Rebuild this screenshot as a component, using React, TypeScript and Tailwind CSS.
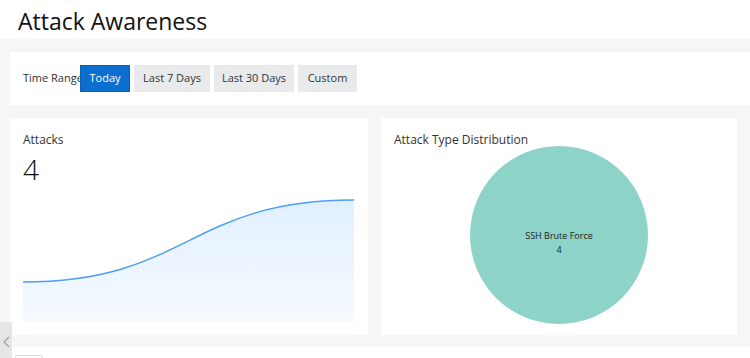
import React from 'react';

const ranges = [
  { label: 'Today', w: 'w-[50px]' },
  { label: 'Last 7 Days', w: 'w-[76px]' },
  { label: 'Last 30 Days', w: 'w-[80px]' },
  { label: 'Custom', w: 'w-[59px]' },
];

const TrendChart: React.FC = () => (
  <svg width="331" height="124" viewBox="0 0 331 124" className="block">
    <defs>
      <linearGradient id="attackFill" x1="0" y1="0" x2="0" y2="1">
        <stop offset="0%" stopColor="#e1f0fe" />
        <stop offset="100%" stopColor="#f6faff" />
      </linearGradient>
    </defs>
    <path d="M0,83 C165,83 165,1 331,1 L331,123 L0,123 Z" fill="url(#attackFill)" />
    <path d="M0,83 C165,83 165,1 331,1" fill="none" stroke="#4d9ff2" strokeWidth="1.5" />
  </svg>
);

const PieChart: React.FC = () => (
  <div className="relative w-[178px] h-[178px]">
    <svg width="178" height="178" viewBox="0 0 178 178" className="block">
      <circle cx="89" cy="89" r="89" fill="#8dd3c7" />
    </svg>
    <div className="absolute inset-0 pt-[15px] flex flex-col items-center justify-center text-[9px] leading-[14px] text-[#222]">
      <span>SSH Brute Force</span>
      <span>4</span>
    </div>
  </div>
);

const App: React.FC = () => {
  return (
    <div className="relative w-[750px] h-[358px] overflow-hidden bg-white font-['Open_Sans','Noto_Sans',sans-serif] text-[#222]">
      {/* Header */}
      <div className="h-[39px] pl-[18px] pt-[6px]">
        <h1 className="text-[23px] leading-[30px] font-normal text-[#111]">Attack Awareness</h1>
      </div>

      {/* Content */}
      <div className="bg-[#f6f6f6] pt-[13px] pl-[10px] pb-[12px]">
        <div className="bg-white h-[53px] flex items-center pl-[13px]">
          <span className="w-[57px] whitespace-nowrap text-[11px] text-[#333]">Time Range:</span>
          <div className="flex gap-[4px]">
            {ranges.map((r, i) => (
              <button
                key={r.label}
                className={
                  i === 0
                    ? `${r.w} h-[27px] bg-[#0b6fd0] text-white text-[11px] border border-[#0a5fb8]`
                    : `${r.w} h-[27px] bg-[#e9eaeb] text-[#333] text-[11px]`
                }
              >
                {r.label}
              </button>
            ))}
          </div>
        </div>

        <div className="mt-[13px] flex gap-[13px]">
          <div className="w-[358px] h-[217px] bg-white px-[13px] pt-[14px] pb-[12px] flex flex-col">
            <div className="text-[12px] leading-[16px] text-[#333]">Attacks</div>
            <div className="mt-[5px] text-[28px] leading-[32px] font-light text-[#111]">4</div>
            <div className="mt-auto">
              <TrendChart />
            </div>
          </div>
          <div className="w-[356px] h-[217px] bg-white pl-[13px] pt-[14px] relative">
            <div className="text-[12px] leading-[16px] text-[#333]">Attack Type Distribution</div>
            <div className="absolute left-[89px] top-[28px]">
              <PieChart />
            </div>
          </div>
        </div>
      </div>

      {/* Footer stub */}
      <div className="pl-[15px] pt-[8px]">
        <div className="w-[28px] h-[10px] border border-[#ddd] rounded-[2px] bg-white" />
      </div>

      {/* Sidebar collapse tab */}
      <div className="absolute left-0 top-[322px] w-[12px] h-[40px] bg-[#e6e6e6] flex items-center justify-center">
        <svg width="7" height="12" viewBox="0 0 7 12">
          <path d="M6,1 L1,6 L6,11" fill="none" stroke="#9aa0a6" strokeWidth="1.2" />
        </svg>
      </div>
    </div>
  );
};

export default App;
